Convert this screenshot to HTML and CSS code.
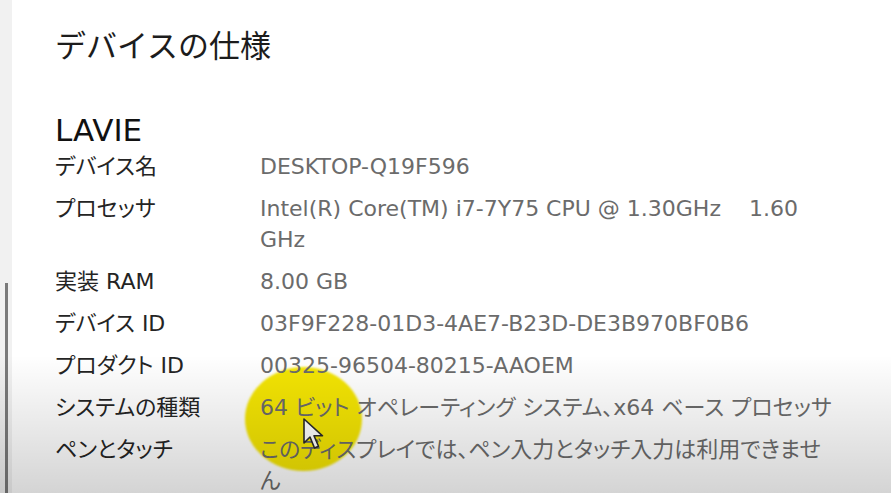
FILE: index.html
```html
<!DOCTYPE html>
<html lang="ja">

<head>
  <meta charset="utf-8">
  <title>デバイスの仕様</title>
  <link rel="stylesheet" href="styles.css">
</head>

<body>
  <div class="screen">
    <div class="rail">
      <div class="thumb"></div>
    </div>

    <div class="content">
      <h1 class="title">デバイスの仕様</h1>

      <h2 class="model">LAVIE</h2>

      <div class="specs">
        <span class="label">デバイス名</span>
        <span class="value">DESKTOP-Q19F596</span>

        <span class="label">プロセッサ</span>
        <span class="value">Intel(R) Core(TM) i7-7Y75 CPU @ 1.30GHz&nbsp;&nbsp;&nbsp; 1.60 GHz</span>

        <span class="label">実装 RAM</span>
        <span class="value">8.00 GB</span>

        <span class="label">デバイス ID</span>
        <span class="value">03F9F228-01D3-4AE7-B23D-DE3B970BF0B6</span>

        <span class="label">プロダクト ID</span>
        <span class="value">00325-96504-80215-AAOEM</span>

        <span class="label">システムの種類</span>
        <span class="value">64 ビット オペレーティング システム、x64 ベース プロセッサ</span>

        <span class="label">ペンとタッチ</span>
        <span class="value">このディスプレイでは、ペン入力とタッチ入力は利用できません</span>
      </div>
    </div>

    <!-- click highlight + mouse pointer -->
    <div class="highlight"></div>
    <svg class="pointer" width="24" height="34" viewBox="0 0 24 34">
      <path d="M2 2 L2 26 L8 20 L12.5 31 L16.5 29.3 L12 18.8 L20.5 18.8 Z" fill="#ffffff" stroke="#2a2a2a" stroke-width="1.6" stroke-linejoin="round"></path>
    </svg>

    <div class="shade"></div>
  </div>
</body>

</html>
```

FILE: styles.css
```css
body {
  margin: 0;
  font-family: "DejaVu Sans", "Noto Sans CJK JP", sans-serif;
  font-feature-settings: "palt";
  background: #ffffff;
}

.screen {
  position: relative;
  width: 891px;
  height: 493px;
  overflow: hidden;
  display: flex;
  background: #ffffff;
}

.rail {
  width: 12px;
  flex: none;
  background: #f1f1f1;
  padding-top: 283px;
  display: flex;
  justify-content: center;
}

.thumb {
  width: 3px;
  background: #7a7a7a;
}

.content {
  flex: 1;
  padding-left: 43px;
  padding-top: 24px;
  position: relative;
  z-index: 1;
}

.title {
  margin: 0;
  font-size: 31px;
  font-weight: normal;
  font-feature-settings: normal;
  line-height: 44px;
  color: #1c1c1c;
}

.model {
  margin: 0;
  margin-top: 44px;
  font-size: 31px;
  font-weight: normal;
  line-height: 36px;
  color: #111111;
}

.specs {
  display: grid;
  grid-template-columns: 205px 576px;
  row-gap: 11px;
  margin-top: 3px;
  font-size: 22px;
  line-height: 31px;
}

.label {
  color: #242424;
}

.value {
  color: #6b6b6b;
}

.highlight {
  position: absolute;
  left: 245px;
  top: 367px;
  width: 117px;
  height: 104px;
  border-radius: 50%;
  background: #f4e503;
  filter: blur(1px);
}

.pointer {
  position: absolute;
  left: 302px;
  top: 417px;
  z-index: 2;
}

.shade {
  position: absolute;
  inset: 0;
  z-index: 3;
  pointer-events: none;
  background: linear-gradient(to bottom, rgba(0, 0, 0, 0) 72%, rgba(0, 0, 0, 0.17) 100%);
}
```
